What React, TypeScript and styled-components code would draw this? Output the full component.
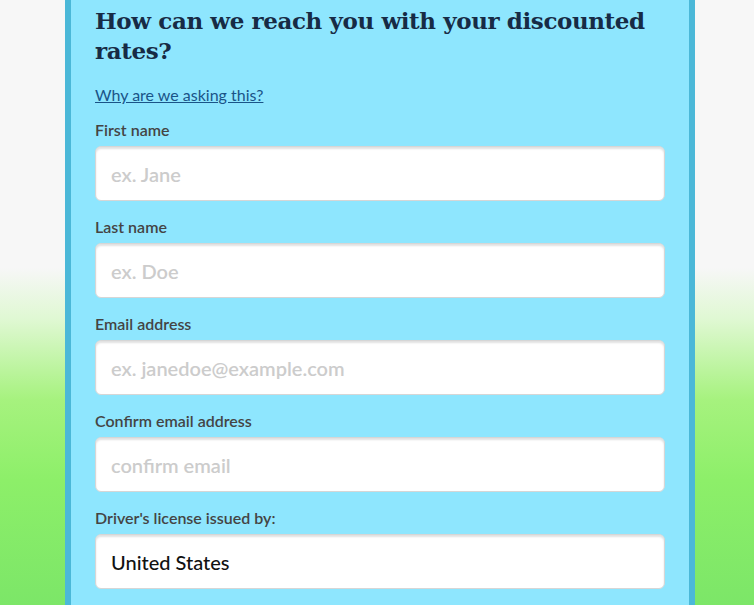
import React from "react";
import styled, { createGlobalStyle } from "styled-components";

const Global = createGlobalStyle`
  html, body { margin: 0; padding: 0; }
  body {
    height: 605px;
    overflow: hidden;
    background: linear-gradient(to bottom, #f7f7f7 0px, #f7f7f7 268px, #dff8d2 320px, #a6f27e 400px, #8def69 480px, #7ce668 605px);
  }
`;

const Page = styled.div`
  display: flex;
  justify-content: center;
  height: 605px;
`;

const Panel = styled.div`
  margin-left: 6px;
  background: #8ee6fe;
  border-left: 6px solid #4bb8d8;
  border-right: 6px solid #4bb8d8;
  padding: 6px 24px 0 24px;
  box-sizing: content-box;
  width: 570px;
`;

const Heading = styled.h2`
  margin: 0;
  font-family: "DejaVu Serif", serif;
  font-weight: bold;
  font-size: 23px;
  line-height: 30px;
  color: #172b45;
  letter-spacing: -0.4px;
`;

const WhyLink = styled.a`
  display: inline-block;
  margin-top: 20px;
  font-family: Lato, "Liberation Sans", sans-serif;
  font-size: 16px;
  line-height: 18px;
  color: #1a5488;
  text-decoration: underline;
`;

const Form = styled.div`
  display: flex;
  flex-direction: column;
  margin-top: 16px;
`;

const Field = styled.div`
  display: flex;
  flex-direction: column;
  margin-bottom: 17px;
`;

const Label = styled.label`
  font-family: Lato, "Liberation Sans", sans-serif;
  font-size: 16px;
  font-weight: 600;
  line-height: 18px;
  color: #444;
  margin-bottom: 7px;
`;

const Input = styled.input`
  box-sizing: border-box;
  width: 100%;
  height: 55px;
  border: 1px solid #d6d6d6;
  border-radius: 6px;
  background: #fff;
  box-shadow: inset 0 2px 2px rgba(0, 0, 0, 0.12);
  padding: 0 15px;
  font-family: Lato, "Liberation Sans", sans-serif;
  font-size: 20px;
  font-weight: 500;
  color: #111;
  outline: none;
  &::placeholder { color: #cccccc; font-weight: 600; }
`;

const fields = [
  { label: "First name", placeholder: "ex. Jane" },
  { label: "Last name", placeholder: "ex. Doe" },
  { label: "Email address", placeholder: "ex. janedoe@example.com" },
  { label: "Confirm email address", placeholder: "confirm email" },
];

export default function App() {
  return (
    <>
      <Global />
      <Page>
        <Panel>
          <Heading>How can we reach you with your discounted rates?</Heading>
          <WhyLink href="#">Why are we asking this?</WhyLink>
          <Form>
            {fields.map((f) => (
              <Field key={f.label}>
                <Label>{f.label}</Label>
                <Input placeholder={f.placeholder} readOnly />
              </Field>
            ))}
            <Field>
              <Label>Driver's license issued by:</Label>
              <Input defaultValue="United States" readOnly />
            </Field>
          </Form>
        </Panel>
      </Page>
    </>
  );
}
